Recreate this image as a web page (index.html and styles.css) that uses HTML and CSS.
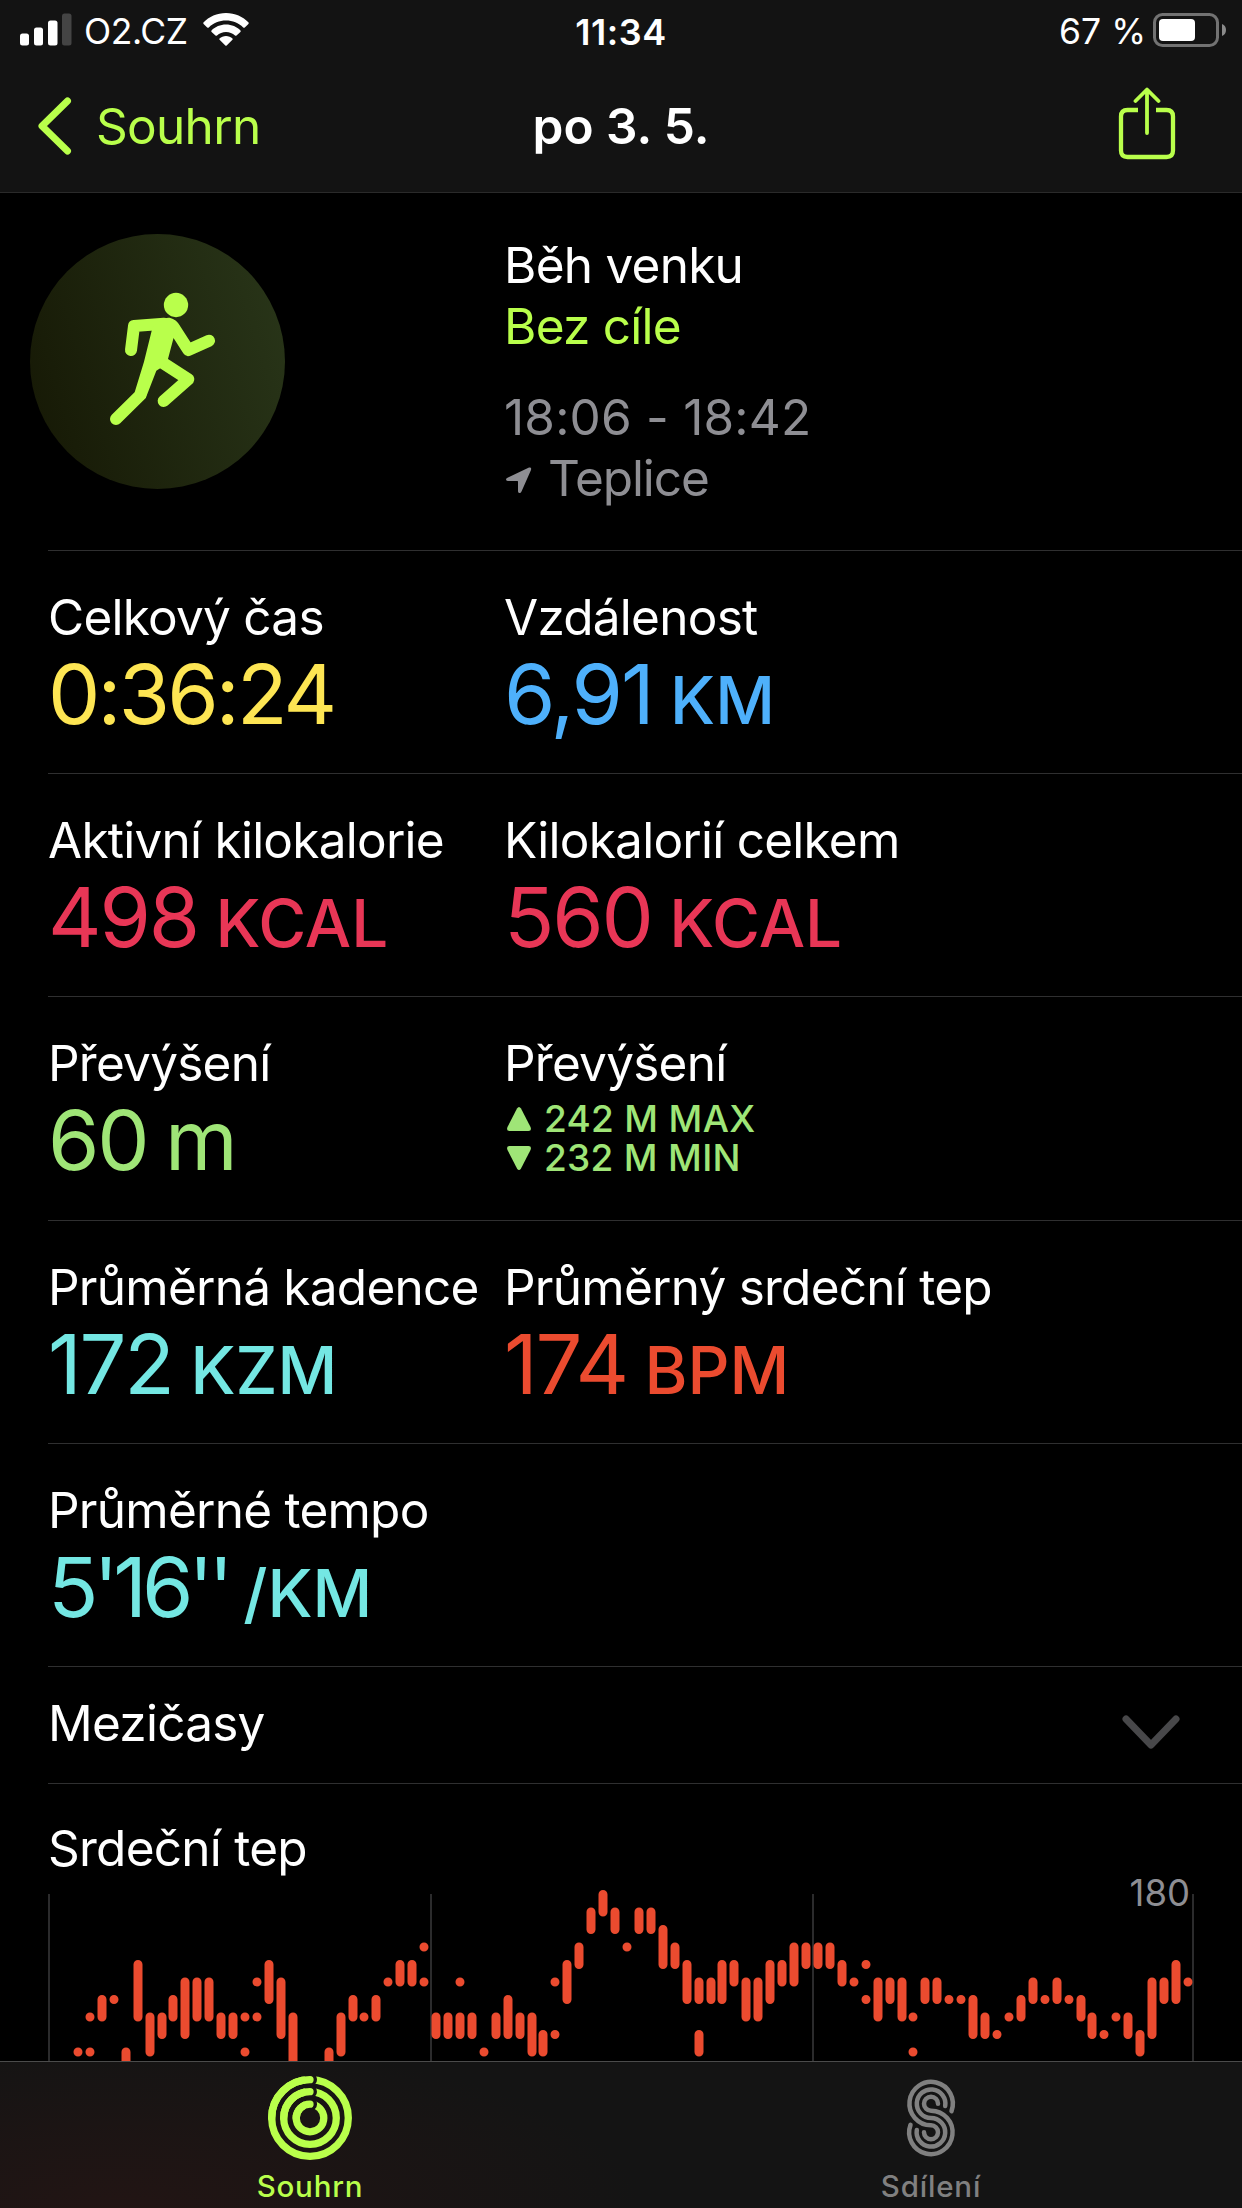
FILE: index.html
```html
<!DOCTYPE html>
<html lang="cs">
<head>
<meta charset="UTF-8" />
<meta name="viewport" content="width=device-width, initial-scale=1" />
<title>Běh venku</title>
<link rel="stylesheet" href="styles.css">
</head>
<body>

<div class="screen">
  <header class="header">
    <div class="statusbar">
      <div class="status-left">
        <svg class="signal" width="52" height="33" viewBox="0 0 52 33" fill="#fff">
          <rect x="0" y="20.5" width="9" height="12" rx="2.5" />
          <rect x="14" y="14.5" width="9" height="18" rx="2.5" />
          <rect x="28" y="7.5" width="9.5" height="25" rx="2.5" />
          <rect x="42" y="0.5" width="9.5" height="32" rx="2.5" fill="#444" />
        </svg>
        <span class="carrier">O2.CZ</span>
        <svg class="wifi" width="46" height="34" viewBox="0 0 46 34" fill="#fff">
          <path d="M23 0C32 0 40 3.700 45.600 9.600Q46 10.300 45.400 11L41.800 14.400Q41 15 40.200 14.400C35.600 10 29.600 7.500 23 7.500S10.400 10 5.800 14.400Q5 15 4.200 14.400L.6 11Q0 10.300.4 9.600C6 3.700 14 0 23 0Z" />
          <path d="M23 11.500C28.700 11.500 33.800 13.800 37.500 17.400Q38.100 18.200 37.400 18.900L33.500 22.500Q32.800 23 32 22.500C29.600 20.200 26.500 19 23 19S16.400 20.200 14 22.500Q13.200 23 12.500 22.500L8.600 18.900Q7.900 18.200 8.500 17.400C12.200 13.800 17.300 11.500 23 11.500Z" />
          <path d="M23 23C25.500 23 27.800 23.900 29.500 25.400Q30 26.100 29.400 26.800L23.700 32.500Q23 33 22.300 32.500L16.600 26.800Q16 26.100 16.500 25.400C18.200 23.900 20.500 23 23 23Z" />
        </svg>
      </div>
      <div class="clock">11:34</div>
      <div class="status-right">
        <span class="percent">67 %</span>
        <svg class="battery" width="74" height="34" viewBox="0 0 74 34">
          <rect x="1.500" y="1.500" width="63" height="31" rx="8" fill="none" stroke="#727272" stroke-width="3" />
          <rect x="6" y="6" width="36" height="22" rx="4" fill="#fff" />
          <path d="M69 11q4 1.500 4 6t-4 6z" fill="#8a8a8a" />
        </svg>
      </div>
    </div>

    <nav class="navbar">
      <a class="back">
        <svg width="36" height="58" viewBox="0 0 36 58" fill="none" stroke="#b9ff4b" stroke-width="7" stroke-linecap="round" stroke-linejoin="round">
          <path d="M30.500 4L5 29L30.500 54" />
        </svg>
        <span>Souhrn</span>
      </a>
      <h1 class="title">po 3. 5.</h1>
      <svg class="share" width="58" height="74" viewBox="0 0 58 74" fill="none" stroke="#b9ff4b" stroke-width="4.300">
        <path d="M20 23H9.500Q3 23 3 29.500V63.500Q3 70 9.500 70H48.500Q55 70 55 63.500V29.500Q55 23 48.500 23H38" />
        <path d="M29 46V3M17.500 14L29 2.500L40.500 14" stroke-width="3.800" stroke-linecap="round" stroke-linejoin="round" />
      </svg>
    </nav>
  </header>

  <main class="content">
    <section class="workout">
      <svg class="badge" width="255" height="255" viewBox="90 72 765 765">
        <defs>
          <linearGradient id="badgeFill" x1="0" y1="0.650" x2="1" y2="0.350">
            <stop offset="0" stop-color="#171a06" />
            <stop offset="1" stop-color="#283418" />
          </linearGradient>
        </defs>
        <circle cx="472.500" cy="454.500" r="382.500" fill="url(#badgeFill)" />
        <g fill="none" stroke="#b9ff4b" stroke-width="36" stroke-linecap="round" stroke-linejoin="round">
          <path d="M393 420L402 348L492 341" />
          <path d="M505 341Q518 344 526 359L565 420L627 392" />
          <path d="M478 452L565 508L491 573" />
          <path d="M421 555L348 627" />
        </g>
        <path d="M458 350L432 455L404 547L421 572L437 565L469 482L500 462L520 386L540 350L510 326H490Z" fill="#b9ff4b" />
        <circle cx="528" cy="285" r="36.500" fill="#b9ff4b" />
      </svg>
      <div class="workout-info">
        <div class="workout-name">Běh venku</div>
        <div class="workout-goal">Bez cíle</div>
        <div class="workout-time">18:06 - 18:42</div>
        <div class="workout-place">
          <svg width="26" height="27" viewBox="0 0 26 27" fill="#8e8e93">
            <path d="M23 .6Q25.800 0 25 3L15.500 24.600Q14.600 26.500 13 26Q12 25.600 12 24.300V14.600Q12 14 11.400 14H1.800Q0 14 0 12.600Q0 11.500 1.500 10.800Z" />
          </svg>
          <span>Teplice</span>
        </div>
      </div>
    </section>

    <section class="metrics">
      <div class="row">
        <div class="metric yellow">
          <div class="label">Celkový čas</div>
          <div class="value duration">0:36:24</div>
        </div>
        <div class="metric blue">
          <div class="label">Vzdálenost</div>
          <div class="value">6,91 <span class="unit">KM</span></div>
        </div>
      </div>
      <div class="row">
        <div class="metric pink">
          <div class="label">Aktivní kilokalorie</div>
          <div class="value">498 <span class="unit">KCAL</span></div>
        </div>
        <div class="metric pink">
          <div class="label">Kilokalorií celkem</div>
          <div class="value">560 <span class="unit">KCAL</span></div>
        </div>
      </div>
      <div class="row">
        <div class="metric green">
          <div class="label">Převýšení</div>
          <div class="value">60 m</div>
        </div>
        <div class="metric green">
          <div class="label">Převýšení</div>
          <div class="range">
            <svg width="24" height="24" viewBox="0 0 24 24"><path d="M10 1.500Q12-1.500 14 1.500L23.500 20Q25 24 21.500 24H2.500Q-1 24 .5 20Z" /></svg>
            <span>242 M MAX</span>
          </div>
          <div class="range">
            <svg width="24" height="24" viewBox="0 0 24 24"><path d="M10 22.500Q12 25.500 14 22.500L23.500 4Q25 0 21.500 0H2.500Q-1 0 .5 4Z" /></svg>
            <span>232 M MIN</span>
          </div>
        </div>
      </div>
      <div class="row">
        <div class="metric cyan">
          <div class="label">Průměrná kadence</div>
          <div class="value">172 <span class="unit">KZM</span></div>
        </div>
        <div class="metric orange">
          <div class="label">Průměrný srdeční tep</div>
          <div class="value">174 <span class="unit">BPM</span></div>
        </div>
      </div>
      <div class="row">
        <div class="metric cyan">
          <div class="label">Průměrné tempo</div>
          <div class="value pace">5'16'' <span class="unit">/KM</span></div>
        </div>
      </div>
    </section>

    <section class="splits">
      <span>Mezičasy</span>
      <svg width="58" height="34" viewBox="0 0 58 34" fill="none" stroke="#48484a" stroke-width="7" stroke-linecap="round" stroke-linejoin="round">
        <path d="M4 4L29 30L54 4" />
      </svg>
    </section>

    <section class="heart">
      <h2 class="heart-title">Srdeční tep</h2>
      <svg class="chart" width="1242" height="193" viewBox="0 1868 1242 193">
        <g fill="#2b2b2c">
          <rect x="48" y="1894" width="2" height="167" />
          <rect x="430" y="1894" width="2" height="167" />
          <rect x="812" y="1894" width="2" height="167" />
          <rect x="1192" y="1894" width="2" height="167" />
        </g>
        <path id="heartBars" fill="none" stroke="#eb4b2f" stroke-width="9" stroke-linecap="round" />
        <text class="axis" x="1190" y="1906" text-anchor="end">180</text>
      </svg>
    </section>
  </main>

  <footer class="tabbar">
    <a class="tab active">
      <svg width="84" height="84" viewBox="-42 -42 84 84" fill="none" stroke="#b9ff4b" stroke-width="7.300" stroke-linecap="round">
        <circle r="38.300" />
        <circle r="26.300" />
        <circle r="13.800" />
        <g fill="#1a1615" stroke="none">
          <circle cx="0.500" cy="-38.300" r="6.500" />
          <circle cx="0.500" cy="-26.300" r="6.500" />
          <circle cx="0.500" cy="-13.800" r="6.500" />
        </g>
        <path d="M-38.300 0A38.300 38.300 0 0 1 0-38.300M-26.300 0A26.300 26.300 0 0 1 0-26.300M-13.800 0A13.800 13.800 0 0 1 0-13.800" />
      </svg>
      <span>Souhrn</span>
    </a>
    <a class="tab">
      <svg width="84" height="84" viewBox="-42 -42 84 84" fill="none" stroke="#808080" stroke-width="4.500" stroke-linecap="round">
        <path d="M20.500-6.900A21.700 21.700 0 1 0 0 7.300A7 7 0 1 1-7 14.300" />
        <path d="M14.200-12A14.300 14.300 0 1 0 0 0A14.300 14.300 0 1 1-14.200 12" />
        <path d="M7-14.300A7 7 0 1 0 0-7.300A21.700 21.700 0 1 1-20.500 6.900" />
      </svg>
      <span>Sdílení</span>
    </a>
  </footer>
</div>

<script src="script.js"></script>
</body>
</html>
```

FILE: styles.css
```css
* {
  box-sizing: border-box;
}
body {
  margin: 0;
  background: #000;
  color: #fff;
  font-family: Inter, "Liberation Sans", sans-serif;
  font-size: 49.5px;
  line-height: 61px;
}
svg {
  display: block;
  flex: none;
}
.screen {
  width: 1242px;
  height: 2208px;
  display: flex;
  flex-direction: column;
  overflow: hidden;
}

/* header */
.header {
  height: 193px;
  background: #131313;
  border-bottom: 1px solid #2a2a2a;
}
.statusbar {
  display: grid;
  grid-template-columns: 1fr auto 1fr;
  height: 62px;
  padding: 0 15px;
  font-size: 35.5px;
  line-height: 64px;
}
.status-left, .status-right {
  display: flex;
  align-items: flex-start;
}
.status-right {
  justify-content: flex-end;
}
.signal {
  margin: 13px 0 0 5px;
}
.carrier {
  margin-left: 12px;
  letter-spacing: -0.4px;
}
.wifi {
  margin: 13px 0 0 15px;
}
.clock {
  font-weight: 600;
  font-size: 36px;
  letter-spacing: 0.5px;
}
.battery {
  margin: 13px 0 0 7px;
}
.navbar {
  display: grid;
  grid-template-columns: 1fr auto 1fr;
  height: 130px;
  padding: 0 37px;
  line-height: 128px;
}
.back {
  display: flex;
  align-items: flex-start;
  color: #b9ff4b;
  letter-spacing: -0.7px;
}
.back svg {
  margin-top: 35px;
}
.back span {
  margin-left: 23px;
}
.title {
  margin: 0;
  font-size: 49.5px;
  font-weight: 600;
}
.share {
  justify-self: end;
  margin: 25px 29px 0 0;
}

/* workout summary */
.content {
  flex: 1;
  min-height: 0;
  overflow: hidden;
  letter-spacing: -0.75px;
}
.workout {
  display: flex;
  height: 357px;
  padding: 41px 0 0 30px;
}
.workout-info {
  margin: 1px 0 0 219px;
}
.workout-goal {
  color: #b9ff4b;
}
.workout-time {
  margin-top: 30px;
  color: #8e8e93;
  letter-spacing: 0.2px;
}
.workout-place {
  display: flex;
  align-items: center;
  color: #8e8e93;
  letter-spacing: -1.1px;
}
.workout-place svg {
  margin: 3px 0 0 2px;
}
.workout-place span {
  margin-left: 16px;
}

/* metrics */
.row {
  display: grid;
  grid-template-columns: 456px 1fr;
  height: 223.2px;
  margin-left: 48px;
  padding-top: 36px;
  border-top: 1px solid #2f2f30;
}
.label {
  color: #fff;
  white-space: nowrap;
}
.value {
  margin-top: 6px;
  font-size: 83px;
  line-height: 80px;
  letter-spacing: -2.2px;
  word-spacing: -3.5px;
  white-space: nowrap;
}
.duration {
  letter-spacing: -2.8px;
}
.pace {
  letter-spacing: -5px;
}
.unit {
  font-size: 65.5px;
  font-weight: 500;
  letter-spacing: 0;
}
.range {
  display: flex;
  align-items: center;
  font-size: 37px;
  font-weight: 500;
  line-height: 39px;
  letter-spacing: 0.3px;
}
.label + .range {
  margin-top: 5px;
}
.range svg {
  margin-left: 3px;
  fill: currentColor;
}
.range span {
  margin-left: 13px;
}
.yellow { color: #fde553; }
.blue { color: #4eb0fb; }
.pink { color: #e83656; }
.green { color: #9fe577; }
.cyan { color: #74e7e3; }
.orange { color: #eb4b2f; }

.splits {
  display: flex;
  justify-content: space-between;
  height: 117px;
  margin-left: 48px;
  padding: 26px 62px 0 0;
  border-top: 1px solid #2f2f30;
}
.splits svg {
  margin-top: 22px;
}

/* heart rate chart */
.heart-title {
  height: 85px;
  margin: 0 0 0 48px;
  padding-top: 34px;
  border-top: 1px solid #2f2f30;
  font-size: 49.5px;
  font-weight: 400;
}
.axis {
  fill: #8e8e93;
  font-size: 36.5px;
  letter-spacing: 0;
}

/* tab bar */
.tabbar {
  display: grid;
  grid-template-columns: 1fr 1fr;
  height: 147px;
  border-top: 1px solid #4b4b4b;
  background: radial-gradient(ellipse 520px 170px at 120px 100%, #221514, #141414);
}
.tab {
  display: flex;
  flex-direction: column;
  align-items: center;
  padding: 14px 1px 0 0;
  font-size: 29.5px;
  font-weight: 500;
  line-height: 36px;
  letter-spacing: 0.8px;
  color: #808080;
}
.tab span {
  margin-top: 8px;
}
.active {
  color: #b9ff4b;
}
```

FILE: script.js
```js
// each column holds [from, to] levels, 0 is the top of the chart
const columns = [
  [[9, 9]], [[7, 7], [9, 9]], [[6, 7]], [[6, 6]], [[9, 11]], [[4, 7]], [[7, 9]], [[7, 8]], [[6, 7]], [[5, 8]],
  [[5, 7]], [[5, 7]], [[7, 8]], [[7, 8]], [[7, 7], [9, 9]], [[5, 5], [7, 7]], [[4, 6]], [[5, 8]], [[7, 11]], [],
  [], [[9, 11]], [[7, 9]], [[6, 7]], [[7, 7]], [[6, 7]], [[5, 5]], [[4, 5]], [[4, 5]], [[3, 3], [5, 5]],
  [[7, 8]], [[7, 8]], [[5, 5], [7, 8]], [[7, 8]], [[9, 9]], [[7, 8]], [[6, 8]], [[7, 8]], [[7, 9]], [[8, 9]],
  [[5, 5], [8, 8]], [[4, 6]], [[3, 4]], [[1, 2]], [[0, 1]], [[1, 2]], [[3, 3]], [[1, 2]], [[1, 2]], [[2, 4]],
  [[3, 4]], [[4, 6]], [[5, 6], [8, 9]], [[5, 6]], [[4, 6]], [[4, 5]], [[5, 7]], [[5, 7]], [[4, 6]], [[4, 5]],
  [[3, 5]], [[3, 4]], [[3, 4]], [[3, 4]], [[4, 5]], [[5, 5]], [[4, 4], [6, 6]], [[5, 7]], [[5, 6]], [[5, 7]],
  [[7, 7], [9, 9]], [[5, 6]], [[5, 6]], [[6, 6]], [[6, 6]], [[6, 8]], [[7, 8]], [[8, 8]], [[7, 7]], [[6, 7]],
  [[5, 6]], [[6, 6]], [[5, 6]], [[6, 6]], [[6, 7]], [[7, 8]], [[8, 8]], [[7, 7]], [[7, 8]], [[8, 9]],
  [[5, 8]], [[5, 6]], [[4, 6]], [[5, 5]]
];

const levelY = level => 1894.5 + level * 17.5;

let d = '';
columns.forEach((ranges, i) => {
  const x = 78 + Math.round(i * 11.935);
  ranges.forEach(([from, to]) => {
    d += `M${x} ${levelY(from)}V${levelY(to)}`;
  });
});
document.getElementById('heartBars').setAttribute('d', d);
```
